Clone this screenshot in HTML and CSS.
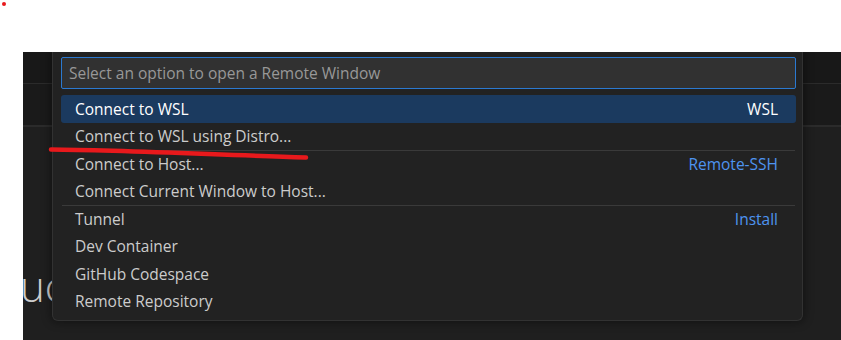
FILE: index.html
```html
<!DOCTYPE html>
<html lang="en">
<head>
    <meta charset="UTF-8">
    <title>Remote Window</title>
    <link rel="stylesheet" href="styles.css">
</head>
<body>
    <span class="dot"></span>

    <div class="workbench">
        <div class="tabs"></div>
        <div class="toolbar"></div>
        <div class="editor">
            <h1 class="heading">uc</h1>
        </div>

        <!-- Quick pick -->
        <div class="quick-pick">
            <div class="quick-input">Select an option to open a Remote Window</div>
            <ul class="quick-list">
                <li class="item selected"><span>Connect to WSL</span><span class="tag">WSL</span></li>
                <li class="item"><span>Connect to WSL using Distro...</span></li>
                <li class="item sep"><span>Connect to Host...</span><span class="tag link">Remote-SSH</span></li>
                <li class="item"><span>Connect Current Window to Host...</span></li>
                <li class="item sep"><span>Tunnel</span><span class="tag link">Install</span></li>
                <li class="item"><span>Dev Container</span></li>
                <li class="item"><span>GitHub Codespace</span></li>
                <li class="item"><span>Remote Repository</span></li>
            </ul>
        </div>
    </div>

    <!-- hand drawn underline -->
    <svg class="scribble" width="841" height="340" viewBox="0 0 841 340">
        <path d="M51 149.5 C 120 150, 210 154.5, 306 157.5" fill="none" stroke="#e8191c" stroke-width="4.5" stroke-linecap="round"/>
    </svg>
</body>
</html>
```

FILE: styles.css
```css
body {
    margin: 0;
    padding: 0;
    background: #ffffff;
    font-family: "Open Sans", "Noto Sans", sans-serif;
    position: relative;
    height: 340px;
    overflow: hidden;
}

.dot {
    position: absolute;
    left: 2px;
    top: 2px;
    width: 4px;
    height: 4px;
    border-radius: 50%;
    background: #e8191c;
}

.workbench {
    position: relative;
    margin: 52px 0 0 23px;
    height: 288px;
    background: #1f1f1f;
    overflow: hidden;
}

.tabs {
    height: 31px;
    background: #181818;
    border-bottom: 1px solid #2b2b2b;
}

.toolbar {
    height: 41px;
    background: #1a1a1a;
    border-bottom: 2px solid #2b2b2b;
}

.editor {
    padding-top: 138px;
}

.heading {
    margin: 0 0 0 -3px;
    font-size: 42px;
    font-weight: 300;
    color: #cccccc;
    line-height: 1;
}

/* Quick pick */
.quick-pick {
    position: absolute;
    left: 29px;
    top: 0;
    width: 735px;
    padding: 5px 6px 5px 8px;
    background: #222222;
    border: 1px solid #323232;
    border-top: none;
    border-radius: 0 0 6px 6px;
    box-shadow: 0 0 8px 2px rgba(0, 0, 0, 0.36);
}

.quick-input {
    height: 30px;
    line-height: 30px;
    padding: 0 7px;
    background: #313131;
    border: 1px solid #2b79d0;
    border-radius: 2px;
    color: #989898;
    font-size: 15.5px;
}

.quick-list {
    list-style: none;
    margin: 6px 0 0;
    padding: 0;
}

.item {
    box-sizing: border-box;
    height: 27.5px;
    display: flex;
    align-items: center;
    justify-content: space-between;
    padding: 0 18px 0 14px;
    color: #cccccc;
    font-size: 15.5px;
    border-radius: 3px;
}

.item.sep {
    border-top: 1px solid #3a3a3a;
    border-radius: 0;
    margin: 0 1px;
    padding-left: 13px;
    padding-right: 17px;
}

.item.selected {
    background: #1b3a5f;
    color: #ffffff;
}

.tag {
    color: #ffffff;
}

.tag.link {
    color: #4e94f0;
}

.scribble {
    position: absolute;
    left: 0;
    top: 0;
    pointer-events: none;
}
```
